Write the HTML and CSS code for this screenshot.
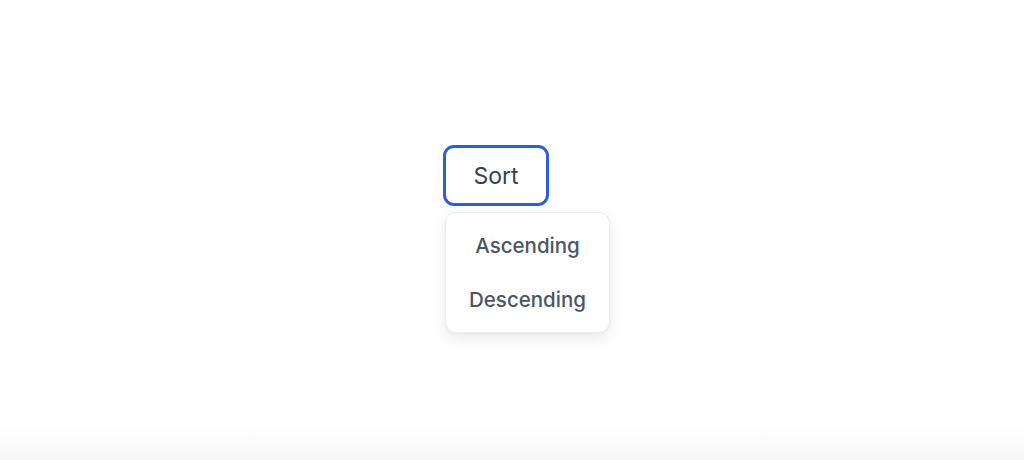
FILE: index.html
```html
<!DOCTYPE html>
<html lang="en">
<head>
<meta charset="utf-8">
<title>Sort</title>
<link rel="stylesheet" href="styles.css">
</head>
<body>
<main class="stage">
  <div class="dropdown">
    <button class="trigger" type="button">Sort</button>
    <ul class="menu">
      <li class="item">Ascending</li>
      <li class="item">Descending</li>
    </ul>
  </div>
</main>
</body>
</html>
```

FILE: styles.css
```css
html, body {
  margin: 0;
  padding: 0;
  height: 100%;
}
body {
  font-family: Inter, "Noto Sans", "Liberation Sans", sans-serif;
  background: linear-gradient(to bottom, #ffffff 0, #ffffff 425px, #f7f7f7 460px);
}
.stage {
  display: flex;
  justify-content: center;
  padding-top: 145px;
}
.dropdown {
  position: relative;
  width: 138px;
}
.trigger {
  box-sizing: border-box;
  width: 106px;
  height: 61px;
  border: 3px solid #2b5fd3;
  border-radius: 11px;
  background: #ffffff;
  color: #374151;
  font-family: inherit;
  font-size: 23px;
  font-weight: 400;
  padding: 0;
  cursor: pointer;
}
.menu {
  position: absolute;
  left: 2px;
  top: 67px;
  box-sizing: border-box;
  width: 165px;
  height: 121px;
  margin: 0;
  padding: 6px 0;
  list-style: none;
  background: #ffffff;
  border: 1px solid #ededed;
  border-radius: 11px;
  box-shadow: 0 6px 16px rgba(0, 0, 0, 0.08), 0 1px 3px rgba(0, 0, 0, 0.04);
  display: flex;
  flex-direction: column;
}
.item {
  height: 54px;
  display: flex;
  align-items: center;
  justify-content: center;
  font-size: 20.5px;
  font-weight: 500;
  color: #4b5563;
}
```
